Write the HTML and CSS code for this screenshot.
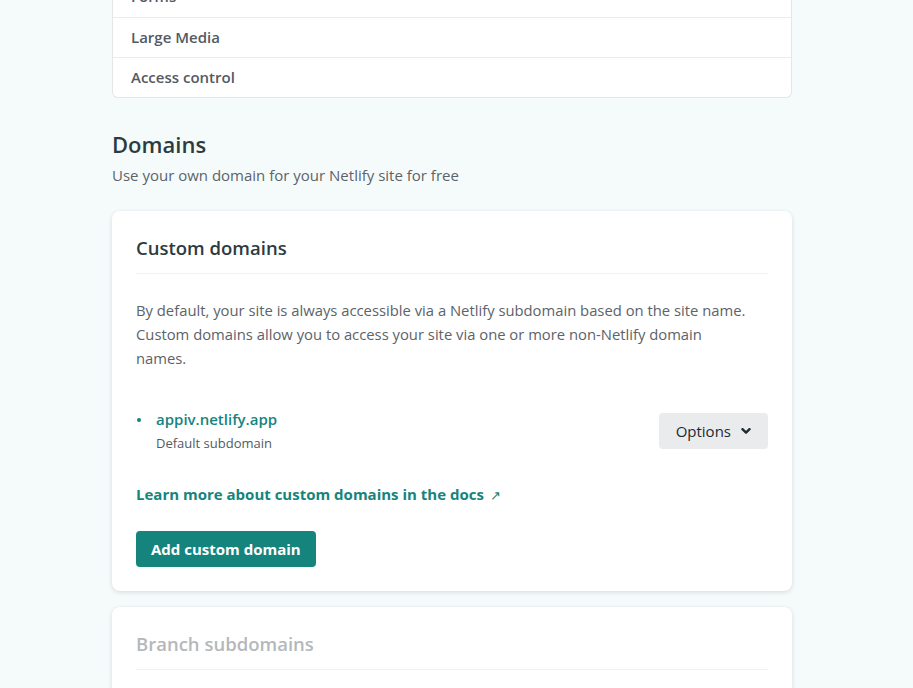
FILE: index.html
```html
<!DOCTYPE html>
<html>
<head>
<meta charset="utf-8">
<link rel="stylesheet" href="styles.css">
</head>
<body>
<div class="page">
  <nav class="subnav">
    <div class="subnav-item">Forms</div>
    <div class="subnav-item">Large Media</div>
    <div class="subnav-item">Access control</div>
  </nav>

  <section class="section">
    <header class="section-head">
      <h2 class="section-title">Domains</h2>
      <p class="section-sub">Use your own domain for your Netlify site for free</p>
    </header>

    <div class="card">
      <h3 class="card-title">Custom domains</h3>
      <p class="card-text">By default, your site is always accessible via a Netlify subdomain based on the site name.<br>Custom domains allow you to access your site via one or more non-Netlify domain<br>names.</p>

      <ul class="domain-list">
        <li class="domain-item">
          <div class="domain-info">
            <span class="domain-name">appiv.netlify.app</span>
            <span class="domain-note">Default subdomain</span>
          </div>
          <button class="btn-options">Options
            <svg class="chev" width="10" height="8" viewBox="0 0 10 8"><path d="M1.5 2.2 L5 5.6 L8.5 2.2" fill="none" stroke="#1d2a30" stroke-width="2.4" stroke-linecap="round" stroke-linejoin="round"/></svg>
          </button>
        </li>
      </ul>

      <a class="docs-link" href="#">Learn more about custom domains in the docs <span class="ext">&#8599;</span></a>

      <button class="btn-primary">Add custom domain</button>
    </div>

    <div class="card card-muted">
      <h3 class="card-title">Branch subdomains</h3>
    </div>
  </section>
</div>
</body>
</html>
```

FILE: styles.css
```css
html, body {
  margin: 0;
  padding: 0;
  background: #f5fbfb;
  font-family: "Open Sans", "Noto Sans", sans-serif;
  color: #545a61;
  overflow: hidden;
  height: 688px;
}

.page {
  width: 680px;
  margin: -23px 0 0 112px;
}

.subnav {
  background: #fff;
  border: 1px solid #e4e6e8;
  border-radius: 0 0 6px 6px;
  border-top: none;
}

.subnav-item {
  height: 39px;
  line-height: 39px;
  padding: 0 18px;
  font-size: 15px;
  font-weight: 600;
  color: #545a61;
  border-top: 1px solid #e9ebed;
}
.subnav-item:first-child { border-top: none; height: 40px; }

.section { padding-top: 32px; }

.section-head { margin-bottom: 25px; }

.section-title {
  margin: 0;
  font-size: 22px;
  font-weight: 600;
  color: #2d3b41;
  line-height: 28px;
}

.section-sub {
  margin: 6px 0 0;
  font-size: 15px;
  line-height: 22px;
  color: #5c6369;
}

.card {
  background: #fff;
  border-radius: 8px;
  box-shadow: 0 1px 4px rgba(14, 30, 37, 0.10), 0 2px 6px rgba(14, 30, 37, 0.04);
  padding: 24px 24px 24px;
  margin-bottom: 16px;
}

.card-title {
  margin: 0;
  font-size: 18.5px;
  font-weight: 600;
  color: #2d3b41;
  line-height: 26px;
  padding-bottom: 12px;
  border-bottom: 1px solid #f0f1f2;
}

.card-text {
  margin: 24px 0 0;
  font-size: 14.8px;
  line-height: 24px;
  color: #5c6369;
}

.domain-list {
  list-style: none;
  margin: 38px 0 0;
  padding: 0;
}

.domain-item {
  display: flex;
  align-items: center;
  justify-content: space-between;
}

.domain-info {
  display: flex;
  flex-direction: column;
  padding-left: 20px;
  position: relative;
}
.domain-info::before {
  content: "";
  position: absolute;
  left: 1px;
  top: 10px;
  width: 4px;
  height: 4px;
  border-radius: 50%;
  background: #15847d;
}

.domain-name {
  font-size: 15px;
  font-weight: 600;
  color: #15847d;
  line-height: 22px;
}

.domain-note {
  font-size: 13px;
  color: #545a61;
  line-height: 20px;
  margin-top: 3px;
}

.btn-options {
  display: flex;
  align-items: center;
  gap: 10px;
  height: 36px;
  padding: 0 17px;
  border: none;
  border-radius: 4px;
  background: #e9ebed;
  font-family: inherit;
  font-size: 15px;
  font-weight: 500;
  color: #1d2a30;
  margin-top: 0;
}

.docs-link {
  display: block;
  margin-top: 30px;
  font-size: 15px;
  font-weight: 700;
  color: #15847d;
  text-decoration: none;
  line-height: 22px;
}
.ext { font-weight: 400; font-size: 13px; margin-left: 2px; }

.btn-primary {
  display: block;
  margin-top: 25px;
  height: 36px;
  padding: 0 15px;
  border: none;
  border-radius: 4px;
  background: #15847d;
  color: #fff;
  font-family: inherit;
  font-size: 15px;
  font-weight: 700;
}

.card-muted .card-title {
  color: #b5b8bb;
  font-weight: 600;
}
```
